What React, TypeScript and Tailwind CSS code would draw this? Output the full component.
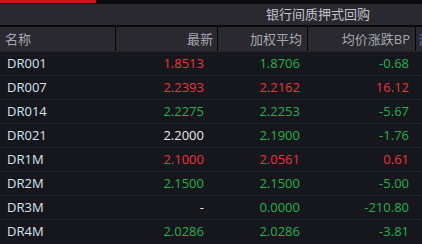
const rows = [
  { name: "DR001", last: "1.8513", lc: "r", avg: "1.8706", ac: "g", bp: "-0.68", bc: "g" },
  { name: "DR007", last: "2.2393", lc: "r", avg: "2.2162", ac: "r", bp: "16.12", bc: "r" },
  { name: "DR014", last: "2.2275", lc: "g", avg: "2.2253", ac: "g", bp: "-5.67", bc: "g" },
  { name: "DR021", last: "2.2000", lc: "w", avg: "2.1900", ac: "g", bp: "-1.76", bc: "g" },
  { name: "DR1M", last: "2.1000", lc: "r", avg: "2.0561", ac: "r", bp: "0.61", bc: "r" },
  { name: "DR2M", last: "2.1500", lc: "g", avg: "2.1500", ac: "g", bp: "-5.00", bc: "g" },
  { name: "DR3M", last: "-", lc: "w", avg: "0.0000", ac: "g", bp: "-210.80", bc: "g" },
  { name: "DR4M", last: "2.0286", lc: "g", avg: "2.0286", ac: "g", bp: "-3.81", bc: "g" },
];

const tone: Record<string, string> = {
  r: "text-[#f0333d]",
  g: "text-[#22b24c]",
  w: "text-[#e8e8e8]",
};

export default function App() {
  return (
    <div
      className="w-[422px] h-[244px] overflow-hidden bg-[#15171c] text-[13px]"
      style={{ fontFamily: '"Open Sans", "Noto Sans CJK SC", sans-serif' }}
    >
      <div className="flex h-[3px] bg-[#0b0b0d]">
        <div className="w-[96px] bg-[#c8191c]" />
      </div>
      <div className="h-[1px] bg-[#0b0b0d]" />

      {/* header group */}
      <div className="grid grid-cols-[218px_198px_1fr] h-[21px] bg-[#29292f] items-center leading-none">
        <div />
        <div className="text-center text-[#c2c2ca] pl-[2px]">银行间质押式回购</div>
        <div />
      </div>
      <div className="h-[2px] bg-[#0b0b0d]" />

      {/* header columns */}
      <div className="grid grid-cols-[116px_102px_90px_108px_1fr] h-[24px] bg-[#29292f] items-center text-[#a7a7b0] leading-none">
        <div className="pl-[5px] h-full flex items-center border-r border-[#050505]">名称</div>
        <div className="pr-[4px] h-full flex items-center justify-end border-r border-[#050505]">最新</div>
        <div className="pr-[5px] h-full flex items-center justify-end border-r border-[#050505]">加权平均</div>
        <div className="pr-[5px] h-full flex items-center justify-end border-r border-[#050505]">均价涨跌BP</div>
        <div className="pl-[3px] h-full flex items-center text-[#4a8fe0] overflow-hidden whitespace-nowrap">涨</div>
      </div>

      {rows.map((r) => (
        <div
          key={r.name}
          className="grid grid-cols-[116px_102px_90px_108px_1fr] h-[24px] items-center border-t border-[#23252b] leading-none"
        >
          <div className="pl-[7px] text-[#d6e4f4]">{r.name}</div>
          <div className={`text-right pr-[14px] ${tone[r.lc]}`}>{r.last}</div>
          <div className={`text-right pr-[8px] ${tone[r.ac]}`}>{r.avg}</div>
          <div className={`text-right pr-[7px] ${tone[r.bc]}`}>{r.bp}</div>
          <div />
        </div>
      ))}
    </div>
  );
}
